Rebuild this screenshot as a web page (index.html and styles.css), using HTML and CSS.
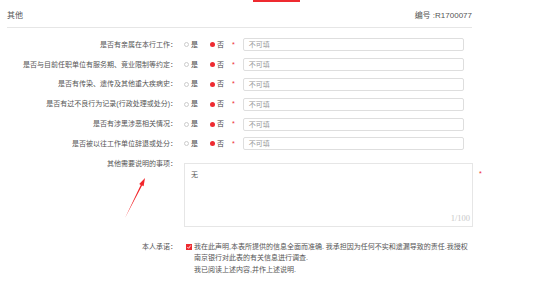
FILE: index.html
```html
<!DOCTYPE html>
<html lang="zh-CN">
<head>
    <meta charset="UTF-8">
    <title>其他</title>
    <link rel="stylesheet" href="styles.css">
</head>
<body>
    <div class="page">
        <div class="tab-mark"></div>

        <div class="header">
            <span class="title">其他</span>
            <span class="code">编号 :R1700077</span>
        </div>

        <div class="rows">
            <div class="row">
                <div class="label">是否有亲属在本行工作：</div>
                <span class="radio"></span><span class="opt">是</span>
                <span class="radio on"></span><span class="opt">否</span>
                <span class="star">*</span>
                <div class="input">不可填</div>
            </div>
            <div class="row">
                <div class="label">是否与目前任职单位有服务期、竞业限制等约定：</div>
                <span class="radio"></span><span class="opt">是</span>
                <span class="radio on"></span><span class="opt">否</span>
                <span class="star">*</span>
                <div class="input">不可填</div>
            </div>
            <div class="row">
                <div class="label">是否有传染、遗传及其他重大疾病史：</div>
                <span class="radio"></span><span class="opt">是</span>
                <span class="radio on"></span><span class="opt">否</span>
                <span class="star">*</span>
                <div class="input">不可填</div>
            </div>
            <div class="row">
                <div class="label">是否有过不良行为记录(行政处理或处分)：</div>
                <span class="radio"></span><span class="opt">是</span>
                <span class="radio on"></span><span class="opt">否</span>
                <span class="star">*</span>
                <div class="input">不可填</div>
            </div>
            <div class="row">
                <div class="label">是否有涉黑涉恶相关情况：</div>
                <span class="radio"></span><span class="opt">是</span>
                <span class="radio on"></span><span class="opt">否</span>
                <span class="star">*</span>
                <div class="input">不可填</div>
            </div>
            <div class="row">
                <div class="label">是否被以往工作单位辞退或处分：</div>
                <span class="radio"></span><span class="opt">是</span>
                <span class="radio on"></span><span class="opt">否</span>
                <span class="star">*</span>
                <div class="input">不可填</div>
            </div>
        </div>

        <div class="note-row">
            <div class="label note-label">其他需要说明的事项：</div>
            <div class="note-box">
                <span class="note-text">无</span>
                <span class="counter">1/100</span>
            </div>
            <span class="star note-star">*</span>

            <svg class="arrow" width="30" height="48" viewBox="0 0 30 48">
                <polygon points="5,44 20.7,10.9 19.2,10.1 25,4 23.6,12.3 22.1,11.6" fill="#f2262b"/>
            </svg>
        </div>

        <div class="promise">
            <div class="label">本人承诺：</div>
            <span class="check">
                <svg width="6" height="6" viewBox="0 0 6 6">
                    <path d="M1.4 3.1 L2.6 4.3 L4.7 1.5" fill="none" stroke="#fff" stroke-width="0.9"/>
                </svg>
            </span>
            <div class="promise-text">
                我在此声明,本表所提供的信息全面而准确. 我承担因为任何不实和遗漏导致的责任.我授权<br>
                南京银行对此表的有关信息进行调查.<br>
                我已阅读上述内容,并作上述说明.
            </div>
        </div>
    </div>
</body>
</html>
```

FILE: styles.css
```css
:root {
    --red: #ee2a30;
    --text: #555555;
    --text-light: #999999;
    --line: #e6e6e6;
    --border: #dedede;
}

* {
    margin: 0;
    padding: 0;
    box-sizing: border-box;
}

body {
    background: #ffffff;
    color: var(--text);
    font-family: "Liberation Sans", "Noto Sans CJK SC", sans-serif;
    font-size: 7px;
}

.page {
    width: 554px;
    height: 293px;
    position: relative;
    overflow: hidden;
}

.tab-mark {
    width: 47px;
    height: 2px;
    margin-left: 253px;
    background: var(--red);
}

.header {
    height: 26px;
    margin: 0 82px 0 7px;
    display: flex;
    justify-content: space-between;
    align-items: center;
    border-bottom: 1px solid var(--line);
    padding-bottom: 1px;
}

.header .title {
    font-size: 8px;
    color: #555;
}

.header .code {
    font-size: 8px;
    color: #555;
}

.rows {
    margin-top: 7px;
}

.row {
    height: 19.8px;
    display: flex;
    align-items: center;
}

.label {
    width: 177px;
    flex-shrink: 0;
    text-align: right;
    white-space: nowrap;
    line-height: 10px;
    color: var(--text);
}

.radio {
    width: 5px;
    height: 5px;
    border-radius: 50%;
    border: 1px solid #cccccc;
    margin-left: 7px;
}

.radio.on {
    border: none;
    background: var(--red);
    margin-left: 12px;
}

.opt {
    margin-left: 2px;
    line-height: 10px;
    color: #444;
}

.star {
    color: var(--red);
    font-size: 7px;
    margin-left: 8px;
    line-height: 10px;
}

.input {
    width: 221px;
    height: 13px;
    margin-left: 8px;
    border: 1px solid var(--border);
    border-radius: 2px;
    padding-left: 5px;
    line-height: 11px;
    color: var(--text-light);
}

.note-row {
    margin-top: 9px;
    display: flex;
    align-items: flex-start;
    position: relative;
}

.note-label {
    margin-top: -4px;
}

.note-box {
    width: 289px;
    height: 64px;
    margin-left: 7px;
    border: 1px solid var(--line);
    display: flex;
    flex-direction: column;
    justify-content: space-between;
    padding: 6px 2px 3px 6px;
}

.note-text {
    line-height: 10px;
    color: #555;
}

.counter {
    align-self: flex-end;
    font-family: "Liberation Serif", serif;
    font-size: 8.5px;
    color: #c8c8c8;
    line-height: 10px;
}

.note-star {
    margin-left: 6px;
    margin-top: 6px;
}

.arrow {
    position: absolute;
    left: 120px;
    top: 11px;
}

.promise {
    margin-top: 14px;
    display: flex;
    align-items: flex-start;
}

.promise .label {
    line-height: 11.5px;
}

.check {
    width: 6px;
    height: 6px;
    margin: 3px 0 0 9px;
    background: var(--red);
    display: flex;
    flex-shrink: 0;
}

.promise-text {
    margin-left: 2px;
    line-height: 11.5px;
    white-space: nowrap;
    color: #555;
}
```
